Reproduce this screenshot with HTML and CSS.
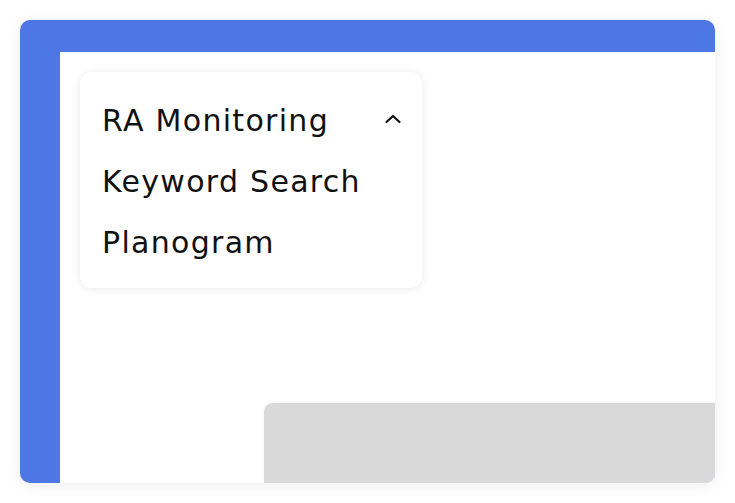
FILE: index.html
```html
<!DOCTYPE html>
<html>
<head>
<meta charset="utf-8">
<link rel="stylesheet" href="styles.css">
</head>
<body>
<div class="frame">
  <div class="canvas">
    <div class="menu">
      <div class="item item-head">
        <span>RA Monitoring</span>
        <svg class="chev" width="18" height="10" viewBox="0 0 18 10"><path d="M2.5 8 L9 2 L15.5 8" fill="none" stroke="#111" stroke-width="2.2" stroke-linecap="round" stroke-linejoin="round"/></svg>
      </div>
      <div class="item">Keyword Search</div>
      <div class="item">Planogram</div>
    </div>
    <div class="panel"></div>
  </div>
</div>
</body>
</html>
```

FILE: styles.css
```css
html, body {
  margin: 0;
  padding: 0;
  background: #ffffff;
}
body {
  width: 735px;
  height: 503px;
  overflow: hidden;
  font-family: "DejaVu Sans", sans-serif;
}
.frame {
  margin: 20px;
  width: 695px;
  height: 463px;
  box-sizing: border-box;
  border-radius: 10px;
  background: #4e77e6;
  padding: 32px 0 0 40px;
  overflow: hidden;
  box-shadow: 0 2px 14px rgba(0, 0, 0, 0.08);
}
.canvas {
  height: 100%;
  background: #ffffff;
  display: flex;
  flex-direction: column;
  padding: 20px 0 0 20px;
  box-sizing: border-box;
}
.menu {
  width: 342px;
  height: 216px;
  box-sizing: border-box;
  border-radius: 12px;
  background: #ffffff;
  box-shadow: 0 1px 10px rgba(0, 0, 0, 0.09);
  padding: 18px 20px 0 22px;
}
.item {
  height: 61px;
  line-height: 61px;
  font-size: 30px;
  letter-spacing: 1.3px;
  color: #111111;
}
.item-head {
  display: flex;
  align-items: center;
  justify-content: space-between;
}
.chev {
  display: block;
  margin-top: -4px;
}
.panel {
  margin-top: auto;
  margin-left: auto;
  width: 451px;
  height: 80px;
  background: #d9d9d9;
  border-top-left-radius: 9px;
  box-shadow: 0 -1px 2px rgba(0, 0, 0, 0.06);
}
```
